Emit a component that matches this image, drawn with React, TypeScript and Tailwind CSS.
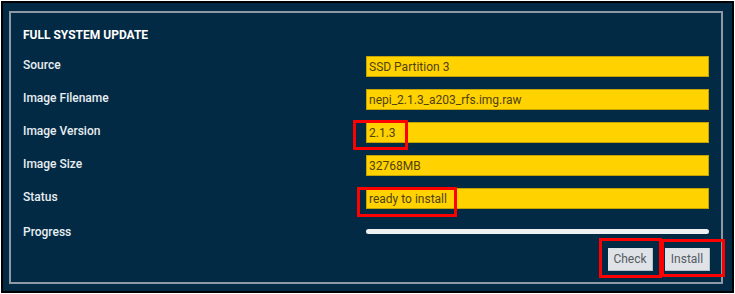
const rows = [
  { label: 'Source', value: 'SSD Partition 3' },
  { label: 'Image Filename', value: 'nepi_2.1.3_a203_rfs.img.raw' },
  { label: 'Image Version', value: '2.1.3' },
  { label: 'Image Size', value: '32768MB' },
  { label: 'Status', value: 'ready to install' },
];

function Field({ label, value }: { label: string; value: string }) {
  return (
    <div className="flex h-[33px] items-center">
      <div className="w-[343px] pb-[3px] text-[12px] font-medium text-[#e8eef2]">{label}</div>
      <div className="flex h-[21px] w-[343px] items-center border border-[#c4a300] bg-[#ffd200] pl-[2px] text-[12px] text-[#4f4210]">
        {value}
      </div>
    </div>
  );
}

function Mark({ className }: { className: string }) {
  return <div className={`pointer-events-none absolute border-[3px] border-[#ff0000] ${className}`} />;
}

export default function App() {
  return (
    <div className="relative h-[294px] w-[735px] bg-white pl-px pt-px" style={{ fontFamily: 'Roboto, "Liberation Sans", sans-serif' }}>
      <div className="h-[292px] w-[733px] border-2 border-black bg-[#032a44] pb-[7px] pl-[6px] pr-[9px] pt-[8px]">
        <div className="h-full w-full border-2 border-[#8d9aa6] pl-[12px] pr-[11px]">
          <div className="mb-[7px] mt-[14px] h-[16px] text-[12px] font-bold leading-[16px] text-white">
            FULL SYSTEM UPDATE
          </div>
          {rows.map((r) => (
            <Field key={r.label} label={r.label} value={r.value} />
          ))}
          <div className="flex h-[33px] items-center">
            <div className="w-[343px] text-[12px] font-medium text-[#e8eef2]">Progress</div>
            <div className="h-[5px] w-[343px] rounded-full bg-[#eef0f2]" />
          </div>
          <div className="flex justify-end gap-[12px]">
            <button className="h-[23px] w-[45px] border-b border-r border-[#b9c0c6] bg-[#dfe3e7] text-[12px] text-[#555a60]">
              Check
            </button>
            <button className="h-[23px] w-[45px] border-b border-r border-[#b9c0c6] bg-[#dfe3e7] text-[12px] text-[#555a60]">
              Install
            </button>
          </div>
        </div>
      </div>
      <Mark className="left-[353px] top-[120px] h-[30px] w-[55px]" />
      <Mark className="left-[357px] top-[187px] h-[30px] w-[100px]" />
      <Mark className="left-[599px] top-[238px] h-[40px] w-[63px]" />
      <Mark className="left-[661px] top-[239px] h-[38px] w-[64px]" />
    </div>
  );
}
